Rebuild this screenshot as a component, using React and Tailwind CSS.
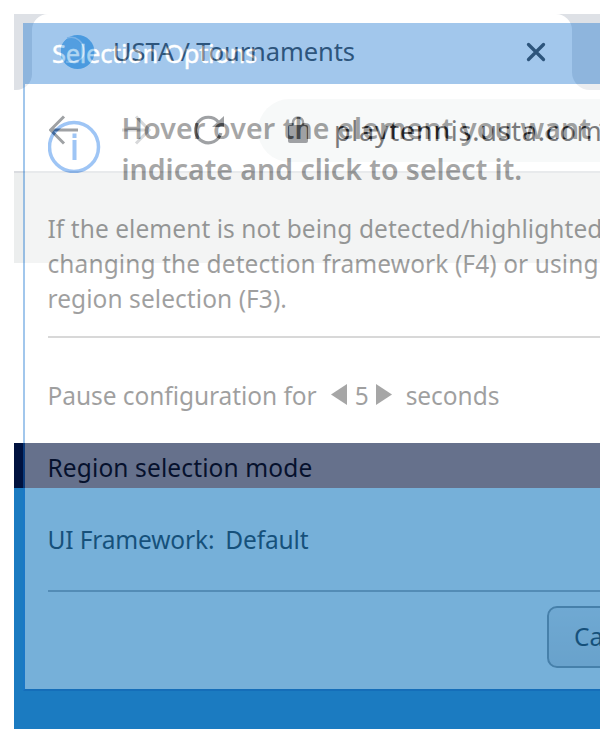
import React from "react";

function TabStrip() {
  return (
    <div className="flex h-[76px] bg-white">
      <div className="w-[18px] shrink-0 rounded-br-[16px] bg-[#dee1e6]" />
      <div className="h-full w-[540px] shrink-0 bg-[linear-gradient(#dee1e6_0_16px,#fff_16px)]">
        <div className="flex h-full items-center rounded-t-[16px] bg-white pl-[29px] pr-[26px]">
          <svg className="h-[36px] w-[34px] shrink-0" viewBox="0 0 34 36">
            <circle cx="16.5" cy="18" r="17" fill="#6bb4e9" />
            <path d="M1 11C4 6 7 4 10 4C17 5 22 12 22 19C22 25 16 29 6 28C1 24 -2 17 1 11Z" fill="#7bbbea" />
            <path d="M6 4C15 1 23 8 23 18C23 25 16 29 5 28" fill="none" stroke="#bcdcf5" strokeWidth="1.600" />
          </svg>
          <span className="-mt-[2px] ml-[18px] whitespace-nowrap text-[25.5px] tracking-[-0.1px] text-[#3c4043]">USTA / Tournaments</span>
          <svg className="ml-auto h-[20px] w-[20px]" viewBox="0 0 20 20">
            <path d="M2.500 2.500L17.500 17.500M17.500 2.500L2.500 17.500" stroke="#3c4043" strokeWidth="3.300" strokeLinecap="round" />
          </svg>
        </div>
      </div>
      <div className="flex-1 rounded-bl-[18px] bg-[#dee1e6]" />
    </div>
  );
}

function AddressBar() {
  return (
    <div className="flex h-[81px] items-center bg-white pl-[35px]">
      <svg className="-mt-[2px] h-[30px] w-[30px] shrink-0" viewBox="0 0 30 30" fill="none" stroke="#5f6368" strokeWidth="3">
        <path d="M29 15H2M15 1.500L1.500 15L15 28.500" />
      </svg>
      <svg className="-mt-[2px] ml-[43px] h-[30px] w-[30px] shrink-0" viewBox="0 0 30 30" fill="none" stroke="#bdbfc2" strokeWidth="3">
        <path d="M0 15H27M14 1.500L27 15L14 28.500" />
      </svg>
      <svg className="-mt-[2px] ml-[42px] h-[30px] w-[30px] shrink-0" viewBox="0 0 30 30" fill="none">
        <path d="M24.300 7A12.800 12.800 0 1 0 26.800 18" stroke="#5f6368" strokeWidth="3.200" />
        <path d="M30 1V12H18Z" fill="#5f6368" />
      </svg>
      <div className="ml-[34px] flex h-[63px] flex-1 items-center rounded-l-full bg-[#f3f5f5] pl-[30px]">
        <svg className="-mt-[1px] h-[28px] w-[20px] shrink-0" viewBox="0 0 20 28">
          <path d="M5 12V6.500a5 5 0 0 1 10 0V12" fill="none" stroke="#5f6368" strokeWidth="2.500" />
          <rect x="0" y="9" width="20" height="18" rx="2" fill="#5f6368" />
        </svg>
        <span className="ml-[26px] whitespace-nowrap pt-[2px] text-[27px] tracking-[0.75px] text-[#202124]">playtennis.usta.com</span>
      </div>
    </div>
  );
}

function BrowserPage() {
  return (
    <div className="col-start-1 row-start-1 flex min-w-0 flex-col overflow-hidden pl-[14px] pt-[14px]">
      <TabStrip />
      <AddressBar />
      <div className="h-[92px] border-t-2 border-[#dadce0] bg-[#eceeee]" />
      <div className="h-[180px] bg-white" />
      <div className="h-[45px] bg-[#00123f]" />
      <div className="flex-1 bg-[#1b7bc1]" />
    </div>
  );
}

function SelectionDialog() {
  return (
    <div className="col-start-1 row-start-1 min-w-0 overflow-hidden pl-[23px] pt-[23px] opacity-40">
      <div className="flex h-[668px] w-[720px] flex-col border-2 border-[#1975d2] border-b-[#0d5cae] bg-white text-[24.5px] text-[#111]">
        <div className="flex h-[59px] shrink-0 items-center bg-[#1975d2] pl-[27px] text-white">
          <span className="-mt-[2px] whitespace-nowrap text-[25.5px] tracking-[-0.3px] [-webkit-text-stroke:0.4px_white]">Selection Options</span>
        </div>
        <div className="flex flex-1 flex-col pl-[22.5px]">
          <div className="flex h-[127px] pt-[24px]">
            <svg className="mt-[12px] h-[53px] w-[53px] shrink-0" viewBox="0 0 53 53">
              <circle cx="26" cy="27" r="24.500" fill="none" stroke="#0f6fe8" strokeWidth="3.500" />
              <path d="M26.500 20V40M26.500 13.500V18" stroke="#0f6fe8" strokeWidth="4" />
            </svg>
            <p className="ml-[21px] whitespace-nowrap text-[28.5px] font-semibold leading-[41px] text-[#222]">
              <span className="tracking-[0.15px]">Hover over the element you want to</span><br />indicate and click to select it.
            </p>
          </div>
          <p className="whitespace-nowrap leading-[35px] tracking-[0.06px]">
            If the element is not being detected/highlighted, try<br />
            <span className="tracking-[0.09px]">changing the detection framework (F4) or using</span><br />
            region selection (F3).
          </p>
          <div className="mt-[20px] h-[2px] shrink-0 bg-[#a0a0a0]" />
          <div className="mt-[41px] flex h-[35px] items-center whitespace-nowrap tracking-[-0.06px]">
            <span>Pause configuration for</span>
            <svg className="-mt-[5px] ml-[14px] h-[21px] w-[16px]" viewBox="0 0 16 21"><path d="M16 0V21L0 10.500Z" fill="#222" /></svg>
            <span className="ml-[8px]">5</span>
            <svg className="-mt-[5px] ml-[7px] h-[21px] w-[16px]" viewBox="0 0 16 21"><path d="M0 0V21L16 10.500Z" fill="#222" /></svg>
            <span className="ml-[14px]">seconds</span>
          </div>
          <p className="mt-[36px] whitespace-nowrap leading-[35px] tracking-[0.12px]">Region selection mode</p>
          <p className="mt-[37px] flex gap-[11px] whitespace-nowrap leading-[35px] tracking-[-0.15px]">
            <span>UI Framework:</span>
            <span>Default</span>
          </p>
          <div className="mt-[33px] h-[2px] shrink-0 bg-[#222]/40" />
          <div className="ml-[499.5px] mt-[14px] flex h-[62px] w-[134px] items-center rounded-[10px] border-2 border-[#888] bg-linear-to-b from-[#eee] to-[#ddd] pl-[25px]">Cancel</div>
        </div>
      </div>
    </div>
  );
}

export default function App() {
  return (
    <main className="grid h-[729px] w-[600px] grid-cols-[600px] grid-rows-[729px] overflow-hidden bg-white font-['Noto_Sans','Open_Sans',sans-serif]">
      <BrowserPage />
      <SelectionDialog />
    </main>
  );
}
